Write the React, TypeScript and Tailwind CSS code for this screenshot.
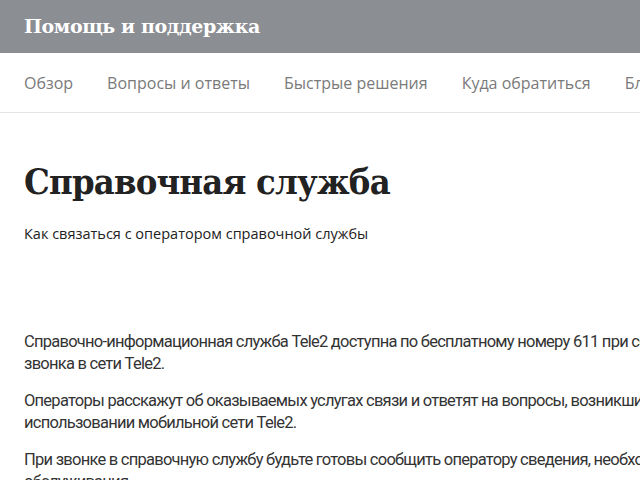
const navItems = ["Обзор", "Вопросы и ответы", "Быстрые решения", "Куда обратиться", "Блог"];

export default function App() {
  return (
    <div className="w-[640px] h-[480px] overflow-hidden bg-white">
      <div className="w-[900px]">
        <header className="flex h-[53px] items-center bg-[#8b8e93] px-6">
          <span className="font-['DejaVu_Serif',serif] text-[19px] font-bold tracking-[-0.4px] text-white">
            Помощь и поддержка
          </span>
        </header>
        <nav className="flex h-[60px] items-center gap-[34px] border-b border-[#e4e4e4] px-6 font-['Open_Sans',sans-serif] text-[16px] text-[#7a7a7a]">
          {navItems.map((item) => (
            <span key={item}>{item}</span>
          ))}
        </nav>
        <main className="px-6">
          <h1 className="mt-[46px] font-['DejaVu_Serif',serif] text-[36px] font-bold font-stretch-condensed leading-[44px] tracking-[-0.8px] text-[#222]">
            Справочная служба
          </h1>
          <p className="mt-[20px] font-['Open_Sans',sans-serif] text-[14.5px] text-[#222]">
            Как связаться с оператором справочной службы
          </p>
          <div className="mt-[86px] space-y-[15px] whitespace-nowrap font-['Roboto',sans-serif] text-[16.5px] leading-[22px] tracking-[-0.75px] text-[#333]">
            <p>
              Справочно-информационная служба Tele2 доступна по бесплатному номеру 611 при совершении
              <br />
              звонка в сети Tele2.
            </p>
            <p>
              Операторы расскажут об оказываемых услугах связи и ответят на вопросы, возникшие при
              <br />
              использовании мобильной сети Tele2.
            </p>
            <p>
              При звонке в справочную службу будьте готовы сообщить оператору сведения, необходимые для
              <br />
              обслуживания.
            </p>
          </div>
        </main>
      </div>
    </div>
  );
}
